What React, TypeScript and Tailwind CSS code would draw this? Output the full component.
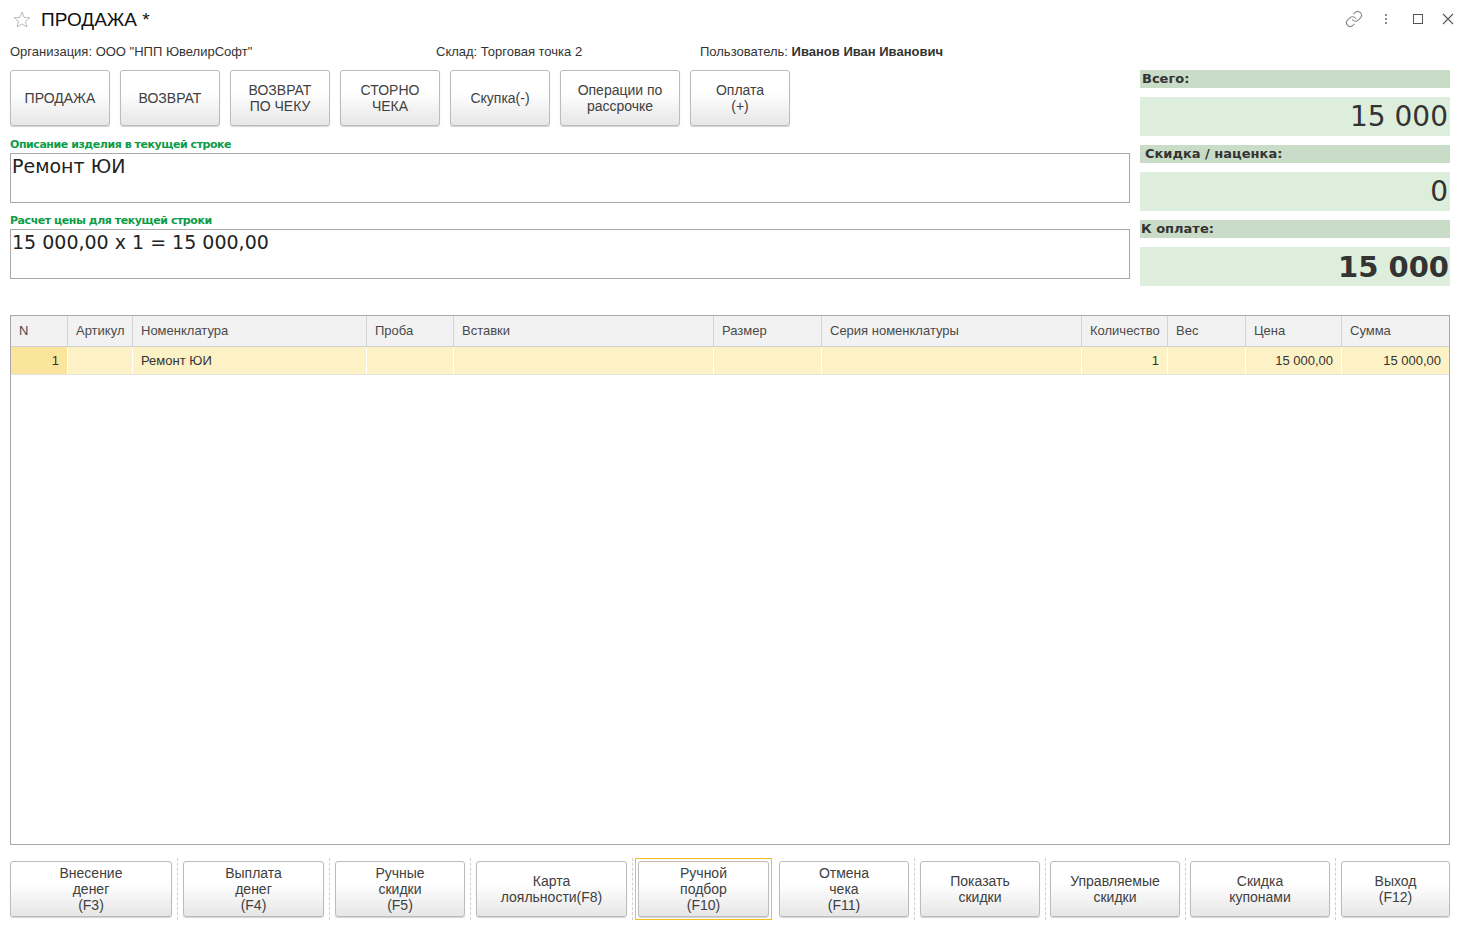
import React from "react";

const btn =
  "flex items-center justify-center text-center rounded-[3px] border border-[#bcbcbc] bg-linear-to-b from-white from-40% to-[#e6e6e6] shadow-[0_1px_1px_rgba(0,0,0,0.18)] text-[14px] leading-[16px] text-[#404040]";

function TopBtn({ w, children }: { w: string; children: React.ReactNode }) {
  return <div className={`${btn} ${w} h-[56px]`}>{children}</div>;
}

function BottomBtn({
  w,
  children,
  focused,
}: {
  w: string;
  children: React.ReactNode;
  focused?: boolean;
}) {
  if (focused) {
    return (
      <div className="h-[62px] -my-[3px] -mx-[3px] border border-[#f3c21a] p-[2px] flex">
        <div className={`${btn} ${w} h-[56px] border-[#7d7d7d]`}>{children}</div>
      </div>
    );
  }
  return <div className={`${btn} ${w} h-[56px]`}>{children}</div>;
}

function Sep({ w, hidden }: { w: string; hidden?: boolean }) {
  return (
    <div className={`${w} flex justify-center self-stretch -my-[3px]`}>
      {!hidden && <div className="border-l border-dashed border-[#cfcfcf] h-[62px]" />}
    </div>
  );
}

const cols = [
  { t: "N", w: "w-[57px]" },
  { t: "Артикул", w: "w-[65px]" },
  { t: "Номенклатура", w: "w-[234px]" },
  { t: "Проба", w: "w-[87px]" },
  { t: "Вставки", w: "w-[260px]" },
  { t: "Размер", w: "w-[108px]" },
  { t: "Серия номенклатуры", w: "w-[260px]" },
  { t: "Количество", w: "w-[86px]" },
  { t: "Вес", w: "w-[78px]" },
  { t: "Цена", w: "w-[96px]" },
  { t: "Сумма", w: "w-[107px]" },
];

const rowVals: { v: string; right?: boolean }[] = [
  { v: "1", right: true },
  { v: "" },
  { v: "Ремонт ЮИ" },
  { v: "" },
  { v: "" },
  { v: "" },
  { v: "" },
  { v: "1", right: true },
  { v: "" },
  { v: "15 000,00", right: true },
  { v: "15 000,00", right: true },
];

const greenLabel =
  "h-[17px] text-[11px] font-bold text-[#0e9b47] leading-[17px] tracking-[-0.45px]";

export default function App() {
  return (
    <div
      className="w-[1463px] h-[925px] bg-white overflow-hidden flex flex-col pl-[10px] pr-[13px]"
      style={{ fontFamily: '"Liberation Sans", Arial, sans-serif' }}
    >
      {/* Title bar */}
      <div className="h-[38px] flex items-center relative">
        <svg width="18" height="17" viewBox="0 0 24 23" className="ml-[3px] mt-[1px]">
          <polygon
            points="12,1.5 14.9,8.6 22.5,9.2 16.7,14.1 18.5,21.5 12,17.5 5.5,21.5 7.3,14.1 1.5,9.2 9.1,8.6"
            fill="none"
            stroke="#b5b5b5"
            strokeWidth="1.3"
            strokeLinejoin="round"
          />
        </svg>
        <div className="ml-[10px] text-[19px] text-[#111] leading-none">ПРОДАЖА *</div>
        <div className="ml-auto flex items-center -mr-[4px]">
          <svg width="18" height="18" viewBox="0 0 24 24" fill="none" stroke="#8a8a8a" strokeWidth="1.5" strokeLinecap="round" strokeLinejoin="round">
            <path d="M10 13a5 5 0 0 0 7.54.54l3-3a5 5 0 0 0-7.07-7.07l-1.72 1.71" />
            <path d="M14 11a5 5 0 0 0-7.54-.54l-3 3a5 5 0 0 0 7.07 7.07l1.71-1.71" />
          </svg>
          <div className="ml-[22px] flex flex-col gap-[2px]">
            <div className="w-[2px] h-[2px] bg-[#8a8a8a]" />
            <div className="w-[2px] h-[2px] bg-[#8a8a8a]" />
            <div className="w-[2px] h-[2px] bg-[#8a8a8a]" />
          </div>
          <div className="ml-[26px] w-[10px] h-[10px] border border-[#555]" />
          <svg width="12" height="12" viewBox="0 0 12 12" className="ml-[19px]">
            <path d="M1 1 L11 11 M11 1 L1 11" stroke="#555" strokeWidth="1.1" />
          </svg>
        </div>
      </div>

      {/* Info row */}
      <div className="h-[26px] flex items-center text-[13px] text-[#333] pt-[2px]">
        <div className="w-[426px]">Организация: ООО "НПП ЮвелирСофт"</div>
        <div className="w-[264px]">Склад: Торговая точка 2</div>
        <div>
          Пользователь: <span className="font-bold">Иванов Иван Иванович</span>
        </div>
      </div>

      {/* Upper area */}
      <div className="flex gap-[10px] mt-[6px]">
        <div className="w-[1120px] flex flex-col">
          <div className="flex gap-[10px]">
            <TopBtn w="w-[100px]">ПРОДАЖА</TopBtn>
            <TopBtn w="w-[100px]">ВОЗВРАТ</TopBtn>
            <TopBtn w="w-[100px]">
              ВОЗВРАТ
              <br />
              ПО ЧЕКУ
            </TopBtn>
            <TopBtn w="w-[100px]">
              СТОРНО
              <br />
              ЧЕКА
            </TopBtn>
            <TopBtn w="w-[100px]">Скупка(-)</TopBtn>
            <TopBtn w="w-[120px]">
              Операции по
              <br />
              рассрочке
            </TopBtn>
            <TopBtn w="w-[100px]">
              Оплата
              <br />
              (+)
            </TopBtn>
          </div>
          <div
            className={`mt-[10px] ${greenLabel}`}
            style={{ fontFamily: '"DejaVu Sans", Verdana, sans-serif' }}
          >
            Описание изделия в текущей строке
          </div>
          <div
            className="h-[50px] border border-[#a9a9a9] px-[1px] pt-[0px] text-[19px] leading-[24px] text-[#222]"
            style={{ fontFamily: '"DejaVu Sans", Verdana, sans-serif' }}
          >
            Ремонт ЮИ
          </div>
          <div
            className={`mt-[9px] ${greenLabel}`}
            style={{ fontFamily: '"DejaVu Sans", Verdana, sans-serif' }}
          >
            Расчет цены для текущей строки
          </div>
          <div
            className="h-[50px] border border-[#a9a9a9] px-[1px] pt-[0px] text-[19px] leading-[24px] text-[#222]"
            style={{ fontFamily: '"DejaVu Sans", Verdana, sans-serif' }}
          >
            15 000,00 x 1 = 15 000,00
          </div>
        </div>

        {/* Totals */}
        <div
          className="w-[310px] flex flex-col text-[#333]"
          style={{ fontFamily: '"DejaVu Sans", Verdana, sans-serif' }}
        >
          <div className="h-[18px] bg-[#c9dcc8] text-[13px] font-bold leading-[18px] pl-[2px]">Всего:</div>
          <div className="mt-[9px] h-[39px] bg-[#ddefdc] text-[28px] leading-[40px] text-right pr-[2px]">15 000</div>
          <div className="mt-[9px] h-[18px] bg-[#c9dcc8] text-[13px] font-bold leading-[18px] pl-[5px]">Скидка / наценка:</div>
          <div className="mt-[9px] h-[39px] bg-[#ddefdc] text-[28px] leading-[40px] text-right pr-[2px]">0</div>
          <div className="mt-[9px] h-[18px] bg-[#c9dcc8] text-[13px] font-bold leading-[18px] pl-[1px]">К оплате:</div>
          <div className="mt-[9px] h-[39px] bg-[#ddefdc] text-[29px] font-bold leading-[41px] text-right pr-[1px]">15 000</div>
        </div>
      </div>

      {/* Table */}
      <div className="mt-[29px] h-[530px] w-[1440px] border border-[#a8a8a8] flex flex-col">
        <div className="flex h-[31px] bg-[#f2f2f2] border-b border-[#cfcfcf]">
          {cols.map((c, i) => (
            <div
              key={i}
              className={`${c.w} ${i < cols.length - 1 ? "border-r border-[#d4d4d4]" : ""} ${i === cols.length - 1 ? "flex-1" : "shrink-0"} px-[8px] flex items-center text-[13px] text-[#4a4a4a] whitespace-nowrap`}
            >
              {c.t}
            </div>
          ))}
        </div>
        <div className="flex h-[28px] bg-[#fdf2c6] border-b border-[#e4e4e4]">
          {cols.map((c, i) => (
            <div
              key={i}
              className={`${c.w} ${i === 0 ? "bg-[#fbe59c]" : ""} ${i < cols.length - 1 ? "border-r border-white" : ""} ${i === cols.length - 1 ? "flex-1" : "shrink-0"} px-[8px] flex items-center text-[13px] text-[#333] whitespace-nowrap ${rowVals[i].right ? "justify-end" : ""}`}
            >
              {rowVals[i].v}
            </div>
          ))}
        </div>
      </div>

      {/* Bottom buttons */}
      <div className="mt-[16px] flex items-center">
        <BottomBtn w="w-[162px]">
          Внесение
          <br />
          денег
          <br />
          (F3)
        </BottomBtn>
        <Sep w="w-[11px]" />
        <BottomBtn w="w-[141px]">
          Выплата
          <br />
          денег
          <br />
          (F4)
        </BottomBtn>
        <Sep w="w-[11px]" />
        <BottomBtn w="w-[130px]">
          Ручные
          <br />
          скидки
          <br />
          (F5)
        </BottomBtn>
        <Sep w="w-[11px]" />
        <BottomBtn w="w-[151px]">
          Карта
          <br />
          лояльности(F8)
        </BottomBtn>
        <Sep w="w-[11px]" />
        <BottomBtn w="w-[131px]" focused>
          Ручной
          <br />
          подбор
          <br />
          (F10)
        </BottomBtn>
        <Sep w="w-[10px]" hidden />
        <BottomBtn w="w-[130px]">
          Отмена
          <br />
          чека
          <br />
          (F11)
        </BottomBtn>
        <Sep w="w-[11px]" />
        <BottomBtn w="w-[120px]">
          Показать
          <br />
          скидки
        </BottomBtn>
        <Sep w="w-[10px]" />
        <BottomBtn w="w-[130px]">
          Управляемые
          <br />
          скидки
        </BottomBtn>
        <Sep w="w-[10px]" />
        <BottomBtn w="w-[140px]">
          Скидка
          <br />
          купонами
        </BottomBtn>
        <Sep w="w-[11px]" />
        <BottomBtn w="w-[109px]">
          Выход
          <br />
          (F12)
        </BottomBtn>
      </div>
    </div>
  );
}
